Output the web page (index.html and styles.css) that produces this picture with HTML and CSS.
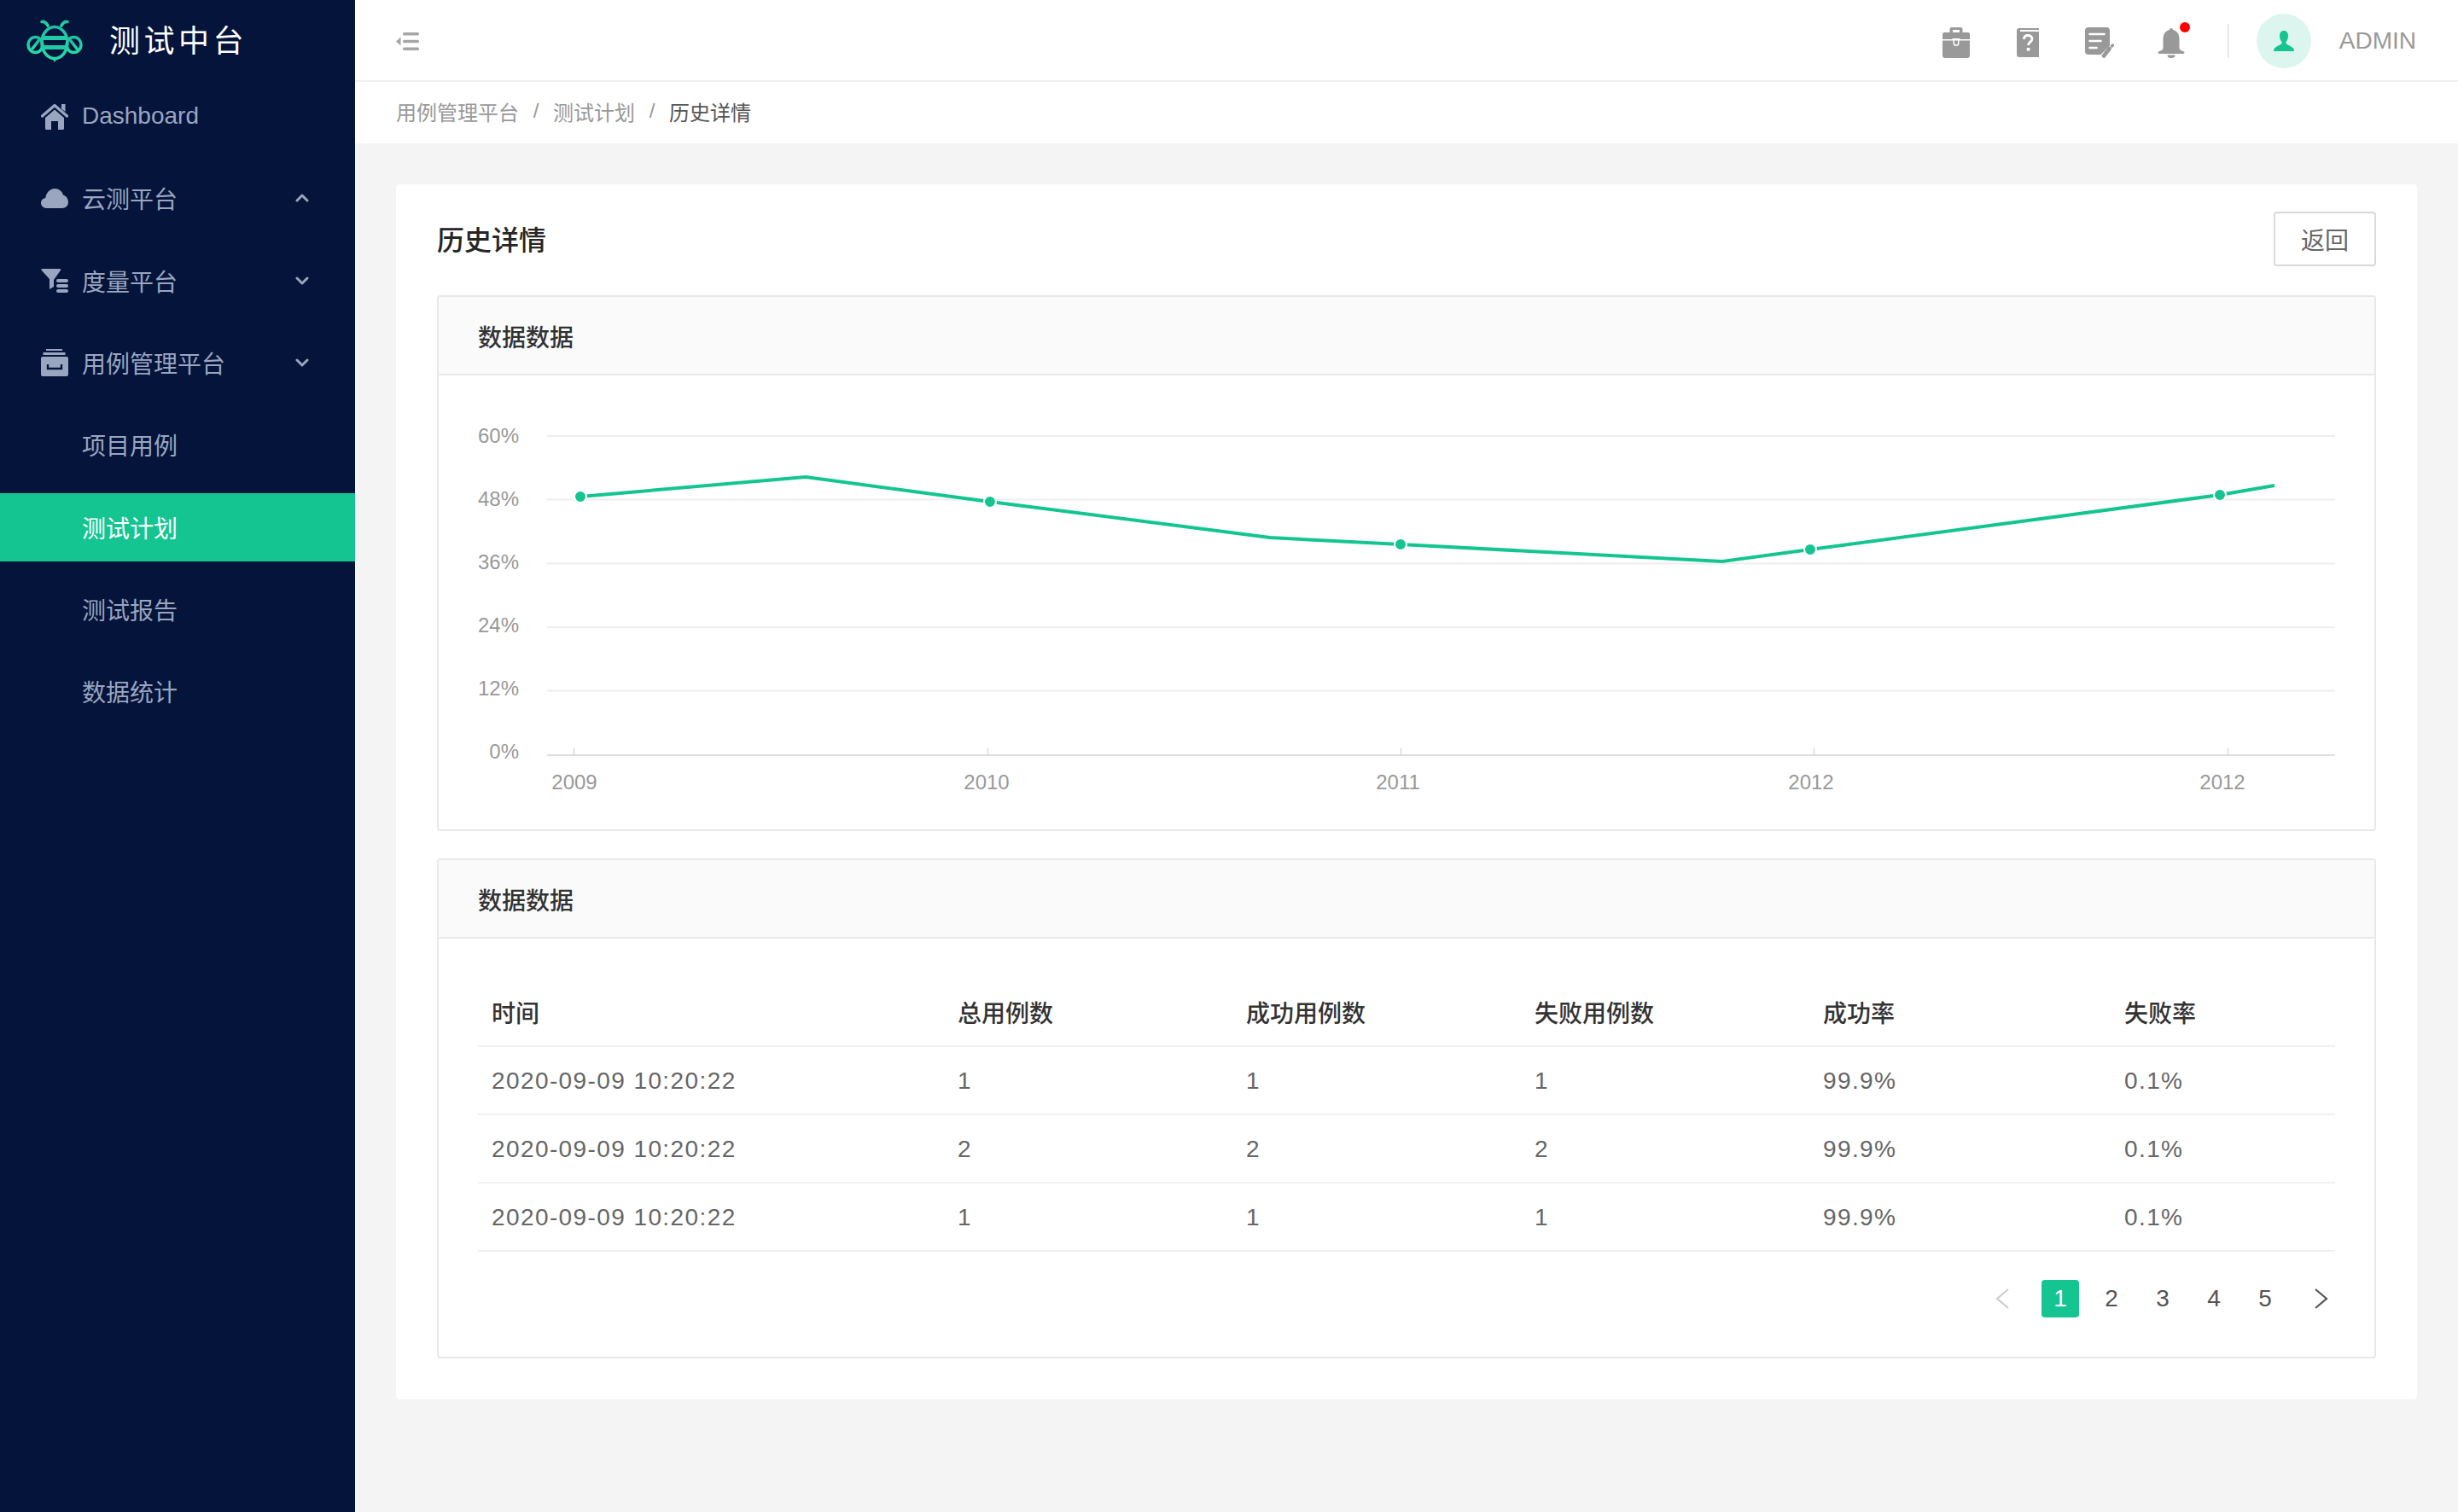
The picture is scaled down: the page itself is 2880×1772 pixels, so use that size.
FILE: index.html
```html
<!DOCTYPE html>
<html lang="zh-CN">
<head>
    <meta charset="UTF-8">
    <meta name="viewport" content="width=device-width, initial-scale=1.0">
    <title>测试中台 - 历史详情</title>
    <link rel="stylesheet" href="styles.css">
</head>
<body>
    <div class="layout">
        <aside class="sidebar">
            <div class="logo">
                <svg class="logo-mark" viewBox="10 12 68 52" width="68" height="52">
                    <defs>
                        <linearGradient id="beeFill" x1="0" y1="0" x2="0" y2="1">
                            <stop offset="0" stop-color="#21bfa3"/>
                            <stop offset="1" stop-color="#27d9a8"/>
                        </linearGradient>
                    </defs>
                    <g fill="none" stroke="url(#beeFill)" stroke-width="3.6" stroke-linecap="round">
                        <ellipse cx="44" cy="40" rx="15" ry="18.5"/>
                        <ellipse cx="21.5" cy="42.5" rx="8.5" ry="9"/>
                        <ellipse cx="66.5" cy="42.5" rx="8.5" ry="9"/>
                        <path d="M18 47 L25 38 M63 38 L70 47"/>
                        <path d="M29 15.5 C32 15 34 16 36 20 M59 15.5 C56 15 54 16 52 20"/>
                    </g>
                    <path d="M29 32h30v5H29zM29 43h30v5H29z" fill="#22c9a6"/>
                    <path d="M41 58h6l-3 5z" fill="#27d9a8"/>
                </svg>
                <span class="logo-text">测试中台</span>
            </div>
            <nav class="menu">
                <a class="menu-item">
                    <svg class="menu-icon" viewBox="0 0 32 31" width="32" height="31">
                        <path d="M1.500 15 16 2.500 30.500 15" fill="none" stroke="currentColor" stroke-width="3.400" stroke-linecap="round" stroke-linejoin="round"/>
                        <path d="M24 1h4.500v9L24 6.500zM16 7.500 27 17v12.500a1.500 1.500 0 0 1-1.500 1.500H20V21h-8v10H6.500A1.500 1.500 0 0 1 5 29.500V17z" fill="currentColor"/>
                    </svg>
                    <span>Dashboard</span>
                </a>
                <a class="menu-item wide-gap">
                    <svg class="menu-icon" viewBox="0 0 32 23" width="32" height="23">
                        <path d="M7 23C3 23 0 20.300 0 17c0-3 2.200-5.400 5.300-5.900C6 5 10.500 0 16 0c5 0 9 3.300 10 7.600 3.500 1 6 4.500 6 8.400 0 4-3 7-7 7z" fill="currentColor"/>
                    </svg>
                    <span class="cjk">云测平台</span>
                    <svg class="menu-arrow" viewBox="0 0 16 10" width="16" height="10"><path d="M2 8l6-6 6 6" fill="none" stroke="currentColor" stroke-width="3" stroke-linecap="round" stroke-linejoin="round"/></svg>
                </a>
                <a class="menu-item">
                    <svg class="menu-icon" viewBox="0 0 32 28" width="32" height="28">
                        <path d="M1.500 0H22c1 0 1.600 1 1 1.800L15 13v8l-5 3V12L.6 1.800C0 1 .5 0 1.500 0z" fill="currentColor"/>
                        <rect x="18" y="12" width="14" height="4" rx="2" fill="currentColor"/>
                        <rect x="18" y="18" width="14" height="4" rx="2" fill="currentColor"/>
                        <rect x="18" y="24" width="14" height="4" rx="2" fill="currentColor"/>
                    </svg>
                    <span class="cjk">度量平台</span>
                    <svg class="menu-arrow" viewBox="0 0 16 10" width="16" height="10"><path d="M2 2l6 6 6-6" fill="none" stroke="currentColor" stroke-width="3" stroke-linecap="round" stroke-linejoin="round"/></svg>
                </a>
                <a class="menu-item">
                    <svg class="menu-icon" viewBox="0 0 32 32" width="32" height="32">
                        <path d="M6 0h19v2H6zM2.500 4h26v3h-26z" fill="currentColor"/>
                        <path d="M2 9h28a2 2 0 0 1 2 2v19a2 2 0 0 1-2 2H2a2 2 0 0 1-2-2V11a2 2 0 0 1 2-2z" fill="currentColor"/>
                        <path d="M8 18v5h16v-5" fill="none" stroke="#05143a" stroke-width="2.400"/>
                    </svg>
                    <span class="cjk">用例管理平台</span>
                    <svg class="menu-arrow" viewBox="0 0 16 10" width="16" height="10"><path d="M2 2l6 6 6-6" fill="none" stroke="currentColor" stroke-width="3" stroke-linecap="round" stroke-linejoin="round"/></svg>
                </a>
                <div class="submenu">
                    <a class="menu-item sub-item"><span class="cjk">项目用例</span></a>
                    <a class="menu-item sub-item active"><span class="cjk">测试计划</span></a>
                    <a class="menu-item sub-item"><span class="cjk">测试报告</span></a>
                    <a class="menu-item sub-item"><span class="cjk">数据统计</span></a>
                </div>
            </nav>
        </aside>

        <div class="content">
            <header class="topbar">
                <svg class="collapse-icon" viewBox="0 0 27 21" width="27" height="21">
                    <path d="M5.500 5.500v10L0 10.500z" fill="#a6a6a6"/>
                    <rect x="8" y="0" width="19" height="3.400" rx="1.500" fill="#a6a6a6"/>
                    <rect x="8" y="8.800" width="19" height="3.400" rx="1.500" fill="#a6a6a6"/>
                    <rect x="8" y="17.600" width="19" height="3.400" rx="1.500" fill="#a6a6a6"/>
                </svg>
                <div class="top-actions">
                    <span class="action-icon">
                        <svg viewBox="0 0 32 36" width="32" height="36">
                            <path d="M11 0h10a2.500 2.500 0 0 1 2.500 2.500V6H20V3h-8v3H8.500V2.500A2.500 2.500 0 0 1 11 0z" fill="#999"/>
                            <path d="M2 6h28a2 2 0 0 1 2 2v6H20.500v-1h-9v1H0V8a2 2 0 0 1 2-2z" fill="#999"/>
                            <path d="M0 15.500h12.500v3a3.500 3.500 0 0 0 7 0v-3H32V33a3 3 0 0 1-3 3H3a3 3 0 0 1-3-3z" fill="#999"/>
                            <path d="M14 15.500h4v3a2 2 0 0 1-4 0z" fill="#999"/>
                        </svg>
                    </span>
                    <span class="action-icon">
                        <svg viewBox="0 0 26 34" width="26" height="34">
                            <path d="M3 0h23v2H4v2h22v30H3a3 3 0 0 1-3-3V3a3 3 0 0 1 3-3z" fill="#999"/>
                            <path d="M8.500 13c0-3 2-4.500 4.700-4.500S18 10 18 12.500c0 3.500-4.500 3.800-4.500 7.500" fill="none" stroke="#fff" stroke-width="2.800"/>
                            <rect x="11.800" y="23" width="3.600" height="3.600" fill="#fff"/>
                        </svg>
                    </span>
                    <span class="action-icon">
                        <svg viewBox="0 0 34 36" width="34" height="36">
                            <path d="M4 0h21a4 4 0 0 1 4 4v17.500L18.500 32H4a4 4 0 0 1-4-4V4a4 4 0 0 1 4-4z" fill="#999"/>
                            <path d="M5.500 8h17M5.500 16h13M5.500 24h8" stroke="#fff" stroke-width="2.600" stroke-linecap="round"/>
                            <path d="M22 33.500 28.500 25" stroke="#999" stroke-width="4.600" stroke-linecap="round"/>
                            <path d="M31.500 22 32.500 21" stroke="#999" stroke-width="3.400" stroke-linecap="round"/>
                        </svg>
                    </span>
                    <span class="action-icon bell">
                        <svg viewBox="0 0 32 35" width="32" height="35">
                            <path d="M14 2a2 2 0 0 1 4 0c5 1.200 7.500 5.500 7.500 10.500V23c0 2 1.500 3.500 5 4.300 1.500.4 1.300 2.700-.5 2.700H2c-1.800 0-2-2.300-.5-2.700 3.500-.8 5-2.300 5-4.300V12.500C6.500 7.500 9 3.200 14 2z" fill="#999"/>
                            <path d="M11.500 31.500h9a4.500 3.500 0 0 1-9 0z" fill="#999"/>
                        </svg>
                        <i class="badge"></i>
                    </span>
                    <span class="top-divider"></span>
                    <span class="avatar">
                        <svg viewBox="0 0 24 24" width="24" height="24">
                            <path d="M12 0c3.300 0 5 2.500 5 6 0 3-1 5.500-2.500 7v1.800c0 1 5 3 8 5.200.8.700 1.500 2 1.500 4H0c0-2 .7-3.300 1.500-4 3-2.200 8-4.200 8-5.200V13C8 11.500 7 9 7 6c0-3.500 1.700-6 5-6z" fill="#14c592"/>
                        </svg>
                    </span>
                    <span class="user-name">ADMIN</span>
                </div>
            </header>

            <div class="breadcrumb">
                <span>用例管理平台</span>
                <span class="sep">/</span>
                <span>测试计划</span>
                <span class="sep">/</span>
                <span class="current">历史详情</span>
            </div>

            <main class="main">
                <section class="card">
                    <div class="card-title">
                        <h2>历史详情</h2>
                        <button class="back-btn">返回</button>
                    </div>

                    <div class="panel">
                        <div class="panel-head">数据数据</div>
                        <svg class="chart" viewBox="514 440 2268 532" width="2268" height="532">
                            <g class="grid">
                                <path d="M641 511H2736M641 585.500H2736M641 660.500H2736M641 735H2736M641 809.500H2736"/>
                            </g>
                            <path class="axis" d="M641 885H2736"/>
                            <path class="tick" d="M672.500 877v8M1157.500 877v8M1641.500 877v8M2125.500 877v8M2610.500 877v8"/>
                            <g class="y-labels">
                                <text x="608" y="519">60%</text>
                                <text x="608" y="593">48%</text>
                                <text x="608" y="667">36%</text>
                                <text x="608" y="741">24%</text>
                                <text x="608" y="815">12%</text>
                                <text x="608" y="889">0%</text>
                            </g>
                            <g class="x-labels">
                                <text x="673" y="925">2009</text>
                                <text x="1156" y="925">2010</text>
                                <text x="1638" y="925">2011</text>
                                <text x="2122" y="925">2012</text>
                                <text x="2604" y="925">2012</text>
                            </g>
                            <polyline class="line" points="680,582 944,559 1160,588 1488,630 1641,638 2018,658 2121,644 2601,580 2665,569"/>
                            <g class="dots">
                                <circle cx="680" cy="582" r="7"/>
                                <circle cx="1160" cy="588" r="7"/>
                                <circle cx="1641" cy="638" r="7"/>
                                <circle cx="2121" cy="644" r="7"/>
                                <circle cx="2601" cy="580" r="7"/>
                            </g>
                        </svg>
                    </div>

                    <div class="panel">
                        <div class="panel-head">数据数据</div>
                        <div class="panel-body">
                            <table class="data-table">
                                <colgroup>
                                    <col class="col-time">
                                    <col class="col-num">
                                    <col class="col-num">
                                    <col class="col-num">
                                    <col class="col-rate">
                                    <col class="col-fail">
                                </colgroup>
                                <thead>
                                    <tr>
                                        <th>时间</th>
                                        <th>总用例数</th>
                                        <th>成功用例数</th>
                                        <th>失败用例数</th>
                                        <th>成功率</th>
                                        <th>失败率</th>
                                    </tr>
                                </thead>
                                <tbody>
                                    <tr>
                                        <td>2020-09-09 10:20:22</td>
                                        <td>1</td>
                                        <td>1</td>
                                        <td>1</td>
                                        <td>99.9%</td>
                                        <td>0.1%</td>
                                    </tr>
                                    <tr>
                                        <td>2020-09-09 10:20:22</td>
                                        <td>2</td>
                                        <td>2</td>
                                        <td>2</td>
                                        <td>99.9%</td>
                                        <td>0.1%</td>
                                    </tr>
                                    <tr>
                                        <td>2020-09-09 10:20:22</td>
                                        <td>1</td>
                                        <td>1</td>
                                        <td>1</td>
                                        <td>99.9%</td>
                                        <td>0.1%</td>
                                    </tr>
                                </tbody>
                            </table>

                            <div class="pagination">
                                <span class="page-arrow disabled">
                                    <svg viewBox="0 0 16 24" width="16" height="24"><path d="M15 1 2 12l13 11" fill="none" stroke="currentColor" stroke-width="2.200"/></svg>
                                </span>
                                <span class="page-num active">1</span>
                                <span class="page-num">2</span>
                                <span class="page-num">3</span>
                                <span class="page-num">4</span>
                                <span class="page-num">5</span>
                                <span class="page-arrow">
                                    <svg viewBox="0 0 16 24" width="16" height="24"><path d="M1 1l13 11L1 23" fill="none" stroke="currentColor" stroke-width="2.200"/></svg>
                                </span>
                            </div>
                        </div>
                    </div>
                </section>
            </main>
        </div>
    </div>
</body>
</html>
```

FILE: styles.css
```css
* { margin: 0; padding: 0; box-sizing: border-box; }

body {
    font-family: "Liberation Sans", "Noto Sans CJK SC", sans-serif;
    font-size: 28px;
    background: #f4f4f4;
    color: #555;
}

.layout { display: flex; min-height: 1772px; }

/* sidebar */
.sidebar {
    width: 416px;
    flex-shrink: 0;
    background: #05143a;
    color: #9aa5c0;
}

.logo {
    height: 96px;
    display: flex;
    align-items: flex-start;
    padding: 22px 0 0 30px;
}

.logo-text {
    margin-left: 30px;
    margin-top: 3px;
    color: #fff;
    font-size: 36px;
    line-height: 48px;
    letter-spacing: 4.5px;
}

.menu-item {
    height: 80px;
    margin-bottom: 16px;
    padding-left: 48px;
    display: flex;
    align-items: center;
    line-height: 40px;
}

.wide-gap { margin-bottom: 17px; }

.menu-item .cjk { padding-top: 5px; }

.menu-icon { width: 32px; margin-right: 16px; flex-shrink: 0; }
.menu-arrow { margin-left: auto; margin-right: 54px; }

.submenu { margin-top: 2px; }
.sub-item { padding-left: 96px; }
.sub-item:first-child { margin-bottom: 17px; }
.sub-item.active { background: #14c592; color: #fff; }

/* top */
.content { flex: 1; min-width: 0; }

.topbar {
    height: 96px;
    background: #fff;
    border-bottom: 2px solid #f0f0f0;
    display: flex;
    align-items: center;
    padding: 2px 49px 0 48px;
}

.top-actions {
    margin-left: auto;
    display: flex;
    align-items: center;
}

.action-icon {
    position: relative;
    width: 36px;
    height: 36px;
    margin-top: 4px;
    margin-right: 48px;
    display: flex;
    align-items: center;
    justify-content: center;
}

.badge {
    position: absolute;
    top: -6px;
    right: -4px;
    width: 12px;
    height: 12px;
    border-radius: 50%;
    background: #f00;
}

.top-divider { width: 2px; height: 40px; background: #e6e8f0; }

.avatar {
    width: 64px;
    height: 64px;
    margin: 0 33px 0 32px;
    border-radius: 50%;
    background: #dcf6ef;
    display: flex;
    align-items: center;
    justify-content: center;
}

.user-name { color: #999; }

.breadcrumb {
    height: 72px;
    background: #fff;
    padding: 0 0 4px 48px;
    display: flex;
    align-items: center;
    font-size: 24px;
    color: #999;
}

.breadcrumb .sep { width: 40px; text-align: center; }
.breadcrumb .current { color: #555; }

/* main */
.main { padding: 48px; }

.card {
    background: #fff;
    border-radius: 4px;
    padding: 32px 48px 48px;
}

.card-title {
    height: 64px;
    margin-bottom: 34px;
    display: flex;
    align-items: center;
    justify-content: space-between;
}

.card-title h2 {
    font-size: 32px;
    font-weight: 500;
    color: #262626;
    margin-top: -2px;
}

.back-btn {
    width: 120px;
    height: 64px;
    background: #fff;
    border: 2px solid #d9d9d9;
    border-radius: 4px;
    color: #666;
    font-family: inherit;
    font-size: 28px;
}

.panel {
    border: 2px solid #e8e8e8;
    border-radius: 4px;
    margin-bottom: 32px;
}

.panel:last-child { margin-bottom: 0; }

.panel-head {
    height: 92px;
    padding: 2px 0 0 46px;
    background: #fafafa;
    border-bottom: 2px solid #e8e8e8;
    display: flex;
    align-items: center;
    color: #333;
    font-weight: 500;
}

.chart { display: block; }
.chart text { font-size: 24px; fill: #999; }
.grid path { stroke: #eee; stroke-width: 2; fill: none; }
.axis { stroke: #ddd; stroke-width: 2; fill: none; }
.tick { stroke: #ccc; stroke-width: 1; fill: none; }
.y-labels text { text-anchor: end; }
.x-labels text { text-anchor: middle; }
.line { fill: none; stroke: #14c592; stroke-width: 4; }
.dots circle { fill: #14c592; stroke: #fff; stroke-width: 2; }

.panel-body { padding: 46px; }

.data-table {
    width: 2176px;
    border-collapse: collapse;
    table-layout: fixed;
}

.col-time { width: 546px; }
.col-num { width: 338px; }
.col-rate { width: 353px; }
.col-fail { width: 263px; }

.data-table th,
.data-table td {
    height: 80px;
    padding: 0 16px;
    text-align: left;
    border-bottom: 2px solid #f0f0f0;
}

.data-table th { color: #333; font-weight: 500; }
.data-table td { padding-top: 2px; letter-spacing: 1.4px; color: #666; }

.pagination {
    margin-top: 33px;
    display: flex;
    justify-content: flex-end;
    align-items: center;
}

.page-num {
    width: 44px;
    height: 44px;
    margin-left: 16px;
    border-radius: 4px;
    display: flex;
    align-items: center;
    justify-content: center;
}

.page-num.active { background: #14c592; color: #fff; }
.page-arrow { width: 16px; height: 24px; color: #555; }
.page-arrow svg { display: block; }
.page-arrow.disabled { color: #ccc; margin-right: 22px; }
.page-arrow:last-child { margin-left: 36px; margin-right: 8px; }
```
